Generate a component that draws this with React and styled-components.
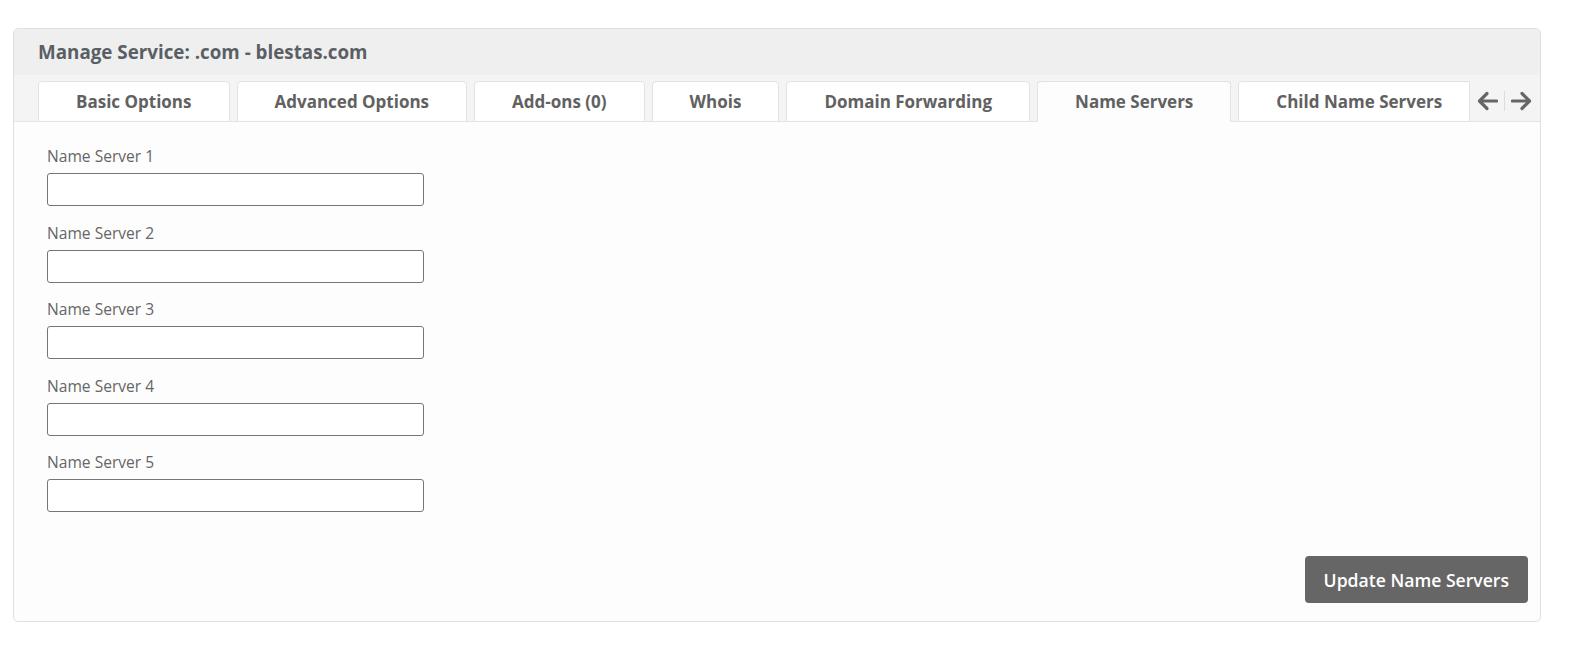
import React from "react";
import styled, { createGlobalStyle } from "styled-components";

const Global = createGlobalStyle`
  html, body { margin: 0; padding: 0; background: #ffffff; overflow: hidden; }
  body { font-family: "Open Sans", "Liberation Sans", sans-serif; }
  * { box-sizing: border-box; }
`;

const Page = styled.div`
  padding: 28px 0 0 13px;
`;

const Card = styled.div`
  width: 1528px;
  border: 1px solid #e0e0e0;
  border-radius: 5px;
  background: #fdfdfd;
  overflow: hidden;
`;

const Header = styled.div`
  background: #efefef;
  height: 46px;
  display: flex;
  align-items: center;
  padding-left: 24px;
`;

const Title = styled.h1`
  margin: 0;
  font-size: 18.8px;
  font-weight: 700;
  color: #5a5f66;
`;

const TabBar = styled.div`
  background: #f4f4f4;
  display: flex;
  align-items: flex-end;
  height: 47px;
  box-shadow: inset 0 -1px 0 #e4e4e4;
`;

const TabList = styled.div`
  flex: 1;
  min-width: 0;
  overflow: hidden;
  display: flex;
  align-items: flex-end;
  gap: 7px;
  padding-left: 24px;
  height: 41px;
`;

const Tab = styled.div`
  flex: none;
  height: 41px;
  padding: 0 37px;
  display: flex;
  align-items: center;
  justify-content: center;
  background: ${(p) => (p.$active ? "#fdfdfd" : "#ffffff")};
  border: 1px solid #e2e2e2;
  border-bottom-color: ${(p) => (p.$active ? "#fdfdfd" : "#e2e2e2")};
  border-radius: 4px 4px 0 0;
  font-size: 17px;
  font-weight: 700;
  color: #616161;
  white-space: nowrap;
`;

const Arrows = styled.div`
  flex: none;
  display: flex;
  align-items: center;
  gap: 6px;
  height: 41px;
  padding: 0 8px 1px 7px;
  border-left: 1px solid #e2e2e2;
  border-bottom: 1px solid #e4e4e4;
`;

const ArrowBtn = styled.div`
  width: 21px;
  height: 24px;
  display: flex;
  align-items: center;
  justify-content: center;
  color: #666;
`;

const Sep = styled.div`
  width: 1px;
  height: 20px;
  background: #dcdcdc;
`;

const Body = styled.div`
  padding: 23px 12px 18px 33px;
  display: flex;
  flex-direction: column;
`;

const Field = styled.div`
  display: flex;
  flex-direction: column;
  margin-bottom: 15.5px;
`;

const Label = styled.label`
  font-size: 15.6px;
  color: #666;
  line-height: 22px;
  margin-bottom: 6px;
`;

const Input = styled.input`
  width: 377px;
  height: 33px;
  border: 1px solid #767676;
  border-radius: 3px;
  background: #fff;
  font-family: inherit;
  font-size: 14px;
  padding: 0 8px;
`;

const Footer = styled.div`
  display: flex;
  justify-content: flex-end;
  margin-top: 28.5px;
`;

const Button = styled.button`
  background: #666666;
  color: #ffffff;
  border: none;
  border-radius: 4px;
  height: 47px;
  padding: 0 19px;
  font-family: "Open Sans", "Liberation Sans", sans-serif;
  font-size: 17.6px;
  font-weight: 600;
  cursor: pointer;
`;

const Arrow = ({ dir }) => (
  <svg width="21" height="20" viewBox="0 0 21 20" fill="none" stroke="currentColor" strokeWidth="3.2" strokeLinecap="round" strokeLinejoin="round">
    {dir === "left" ? (
      <>
        <path d="M19.5 10H3" />
        <path d="M10 2.5L2.5 10L10 17.5" />
      </>
    ) : (
      <>
        <path d="M1.5 10H18" />
        <path d="M11 2.5L18.5 10L11 17.5" />
      </>
    )}
  </svg>
);

const tabs = [
  "Basic Options",
  "Advanced Options",
  "Add-ons (0)",
  "Whois",
  "Domain Forwarding",
  "Name Servers",
  "Child Name Servers",
];

export default function App() {
  return (
    <Page>
      <Global />
      <Card>
        <Header>
          <Title>Manage Service: .com - blestas.com</Title>
        </Header>
        <TabBar>
          <TabList>
            {tabs.map((t) => (
              <Tab key={t} $active={t === "Name Servers"}>
                {t}
              </Tab>
            ))}
          </TabList>
          <Arrows>
            <ArrowBtn>
              <Arrow dir="left" />
            </ArrowBtn>
            <Sep />
            <ArrowBtn>
              <Arrow dir="right" />
            </ArrowBtn>
          </Arrows>
        </TabBar>
        <Body>
          {[1, 2, 3, 4, 5].map((n) => (
            <Field key={n}>
              <Label>Name Server {n}</Label>
              <Input type="text" />
            </Field>
          ))}
          <Footer>
            <Button>Update Name Servers</Button>
          </Footer>
        </Body>
      </Card>
    </Page>
  );
}
